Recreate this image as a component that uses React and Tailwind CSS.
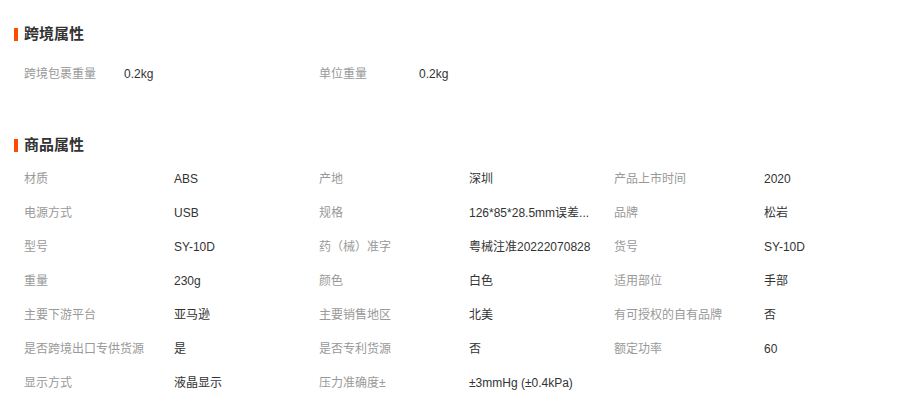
import React from 'react'

const crossBorder = [
  ['跨境包裹重量', '0.2kg'],
  ['单位重量', '0.2kg'],
]

const productAttrs = [
  ['材质', 'ABS'],
  ['产地', '深圳'],
  ['产品上市时间', '2020'],
  ['电源方式', 'USB'],
  ['规格', '126*85*28.5mm误差...'],
  ['品牌', '松岩'],
  ['型号', 'SY-10D'],
  ['药（械）准字', '粤械注准20222070828'],
  ['货号', 'SY-10D'],
  ['重量', '230g'],
  ['颜色', '白色'],
  ['适用部位', '手部'],
  ['主要下游平台', '亚马逊'],
  ['主要销售地区', '北美'],
  ['有可授权的自有品牌', '否'],
  ['是否跨境出口专供货源', '是'],
  ['是否专利货源', '否'],
  ['额定功率', '60'],
  ['显示方式', '液晶显示'],
  ['压力准确度±', '±3mmHg (±0.4kPa)'],
]

const SectionTitle = ({ children }) => (
  <div className="flex items-center h-[20px]">
    <span className="w-[4px] h-[13px] bg-[#ff4a00]" />
    <h3 className="ml-[6px] text-[15px] font-bold text-[#333] leading-[20px]">{children}</h3>
  </div>
)

export default function App() {
  return (
    <div
      className="w-[897px] h-[406px] bg-white pl-[14px] pt-[24px] overflow-hidden"
      style={{ fontFamily: '"Liberation Sans", "Noto Sans CJK SC", sans-serif' }}
    >
      {/* 跨境属性 */}
      <SectionTitle>跨境属性</SectionTitle>
      <div className="flex mt-[13px] pl-[10px]">
        {crossBorder.map(([label, value]) => (
          <div key={label} className="flex items-center h-[34px] w-[295px] text-[12px]">
            <span className="w-[100px] text-[#999]">{label}</span>
            <span className="text-[#333]">{value}</span>
          </div>
        ))}
      </div>

      {/* 商品属性 */}
      <div className="mt-[44px]">
        <SectionTitle>商品属性</SectionTitle>
      </div>
      <div className="grid grid-cols-[295px_295px_295px] mt-[7px] pl-[10px]">
        {productAttrs.map(([label, value]) => (
          <div key={label} className="flex items-center h-[34px] text-[12px]">
            <span className="w-[150px] text-[#999] whitespace-nowrap">{label}</span>
            <span className="text-[#333] whitespace-nowrap">{value}</span>
          </div>
        ))}
      </div>
    </div>
  )
}
